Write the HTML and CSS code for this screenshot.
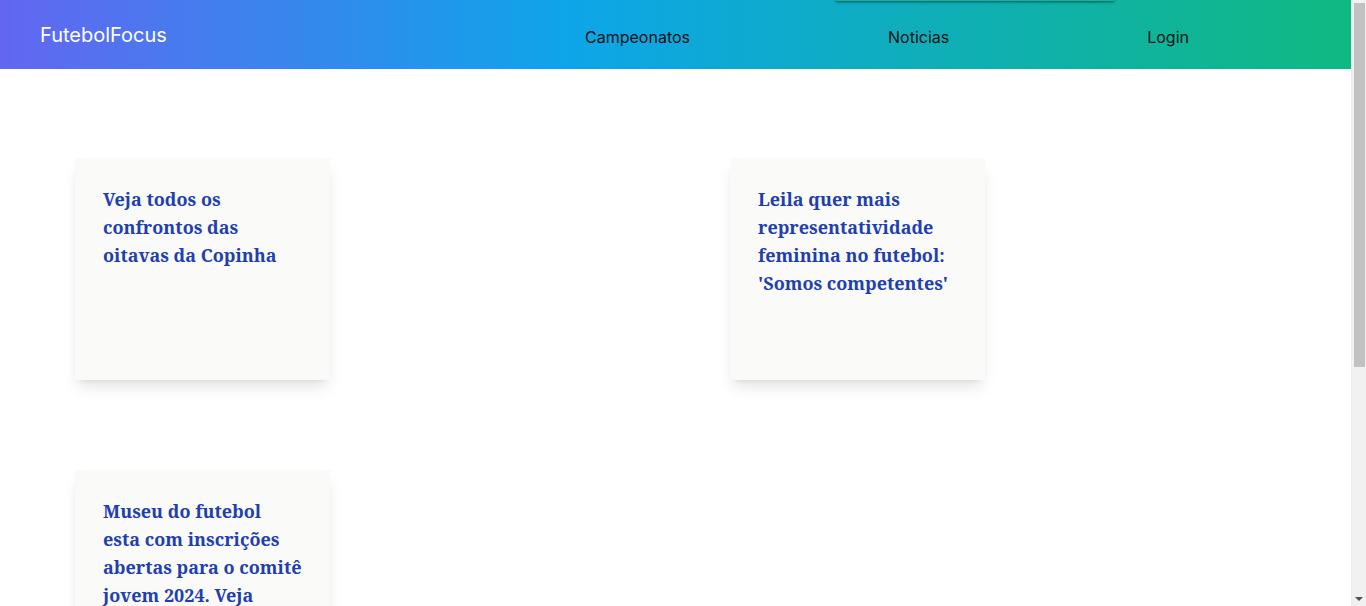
FILE: index.html
```html
<!DOCTYPE html>
<html lang="pt-BR">
<head>
<meta charset="utf-8">
<title>FutebolFocus</title>
<link rel="stylesheet" href="styles.css">
</head>
<body>
<div class="page">
  <header class="topbar">
    <a class="brand" href="#">FutebolFocus</a>
    <nav class="nav">
      <a href="#">Campeonatos</a>
      <a href="#">Noticias</a>
      <a href="#">Login</a>
    </nav>
    <div class="dropdown"></div>
  </header>
  <main class="news">
    <article class="card"><h2>Veja todos os confrontos das oitavas da Copinha</h2></article>
    <article class="card"><h2>Leila quer mais representatividade feminina no futebol: 'Somos competentes'</h2></article>
    <article class="card"><h2>Museu do futebol esta com inscrições abertas para o comitê jovem 2024. Veja como participar</h2></article>
  </main>
</div>
<div class="scrollbar" aria-hidden="true">
  <div class="scrollbar-thumb"></div>
  <div class="scrollbar-arrow"></div>
</div>
</body>
</html>
```
FILE: styles.css
```css
html, body {
  margin: 0;
  padding: 0;
}
body {
  font-family: Inter, "Noto Sans", sans-serif;
  background: #ffffff;
}
.page {
  margin-right: 15px;
}
.topbar {
  position: relative;
  height: 69px;
  display: flex;
  align-items: center;
  justify-content: space-between;
  padding: 0 162px 0 40px;
  background: linear-gradient(to right, #6366f1 0%, #0ea5e9 42%, #10b981 100%);
}
.brand {
  color: #ffffff;
  font-size: 20px;
  text-decoration: none;
}
.nav {
  display: flex;
  gap: 198px;
  padding-top: 5px;
}
.nav a {
  color: #111111;
  font-size: 16px;
  text-decoration: none;
}
.dropdown {
  position: absolute;
  left: 836px;
  top: -120px;
  width: 278px;
  height: 121px;
  background: #14b39a;
  box-shadow: 0 1px 3px rgba(0,0,0,0.35), 0 1px 2px rgba(0,0,0,0.2);
}
.news {
  display: grid;
  grid-template-columns: 255px 255px;
  column-gap: 400px;
  row-gap: 90px;
  padding: 89px 75px 270px;
}
.card {
  background: #fafaf9;
  min-height: 222px;
  box-sizing: border-box;
  padding: 27px 28px 29px;
  box-shadow: 0 10px 15px -3px rgba(0,0,0,0.1), 0 4px 6px -4px rgba(0,0,0,0.1);
}
.card h2 {
  margin: 0;
  font-family: "Noto Serif", "DejaVu Serif", serif;
  font-weight: 700;
  font-size: 18px;
  line-height: 28px;
  color: #1e40af;
}
.scrollbar {
  position: fixed;
  top: 0;
  right: 0;
  width: 15px;
  height: 100%;
  background: #f1f1f1;
  border-left: 1px solid #ececec;
  box-sizing: border-box;
}
.scrollbar-thumb {
  position: absolute;
  top: 3px;
  left: 2px;
  width: 11px;
  height: 364px;
  background: #c1c1c1;
}
.scrollbar-arrow {
  position: absolute;
  bottom: 5px;
  left: 3px;
  width: 0;
  height: 0;
  border-left: 4px solid transparent;
  border-right: 4px solid transparent;
  border-top: 4px solid #505050;
}
```
